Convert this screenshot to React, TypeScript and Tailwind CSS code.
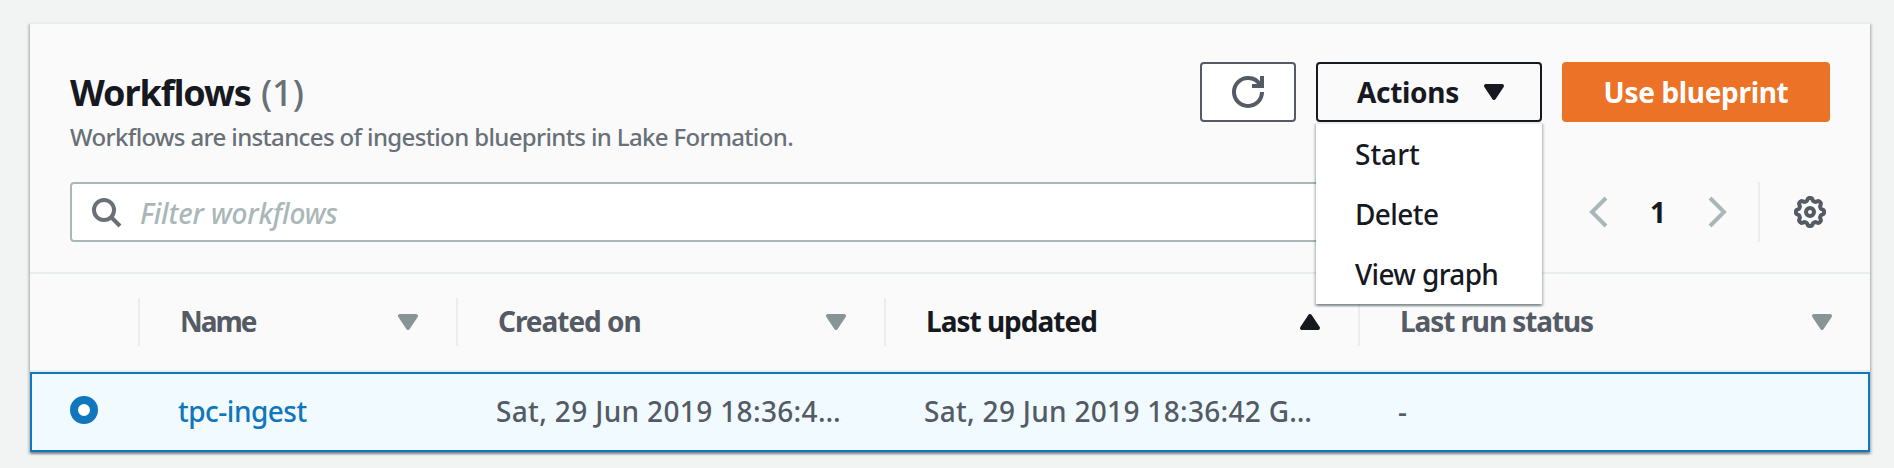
import React, { type ReactNode } from "react";

function Caret({ up = false, className = "" }: { up?: boolean; className?: string }) {
  return (
    <svg viewBox="0 0 16 16" className={`size-8 shrink-0 fill-current stroke-current ${className}`} strokeWidth="2" strokeLinejoin="round">
      <path d={up ? "M4 11h8L8 5l-4 6z" : "M4 5h8l-4 6-4-6z"} />
    </svg>
  );
}

function RefreshIcon() {
  return (
    <svg viewBox="0 0 16 16" className="size-8 fill-none stroke-[#545b64]" strokeWidth="2">
      <path d="M10 5h5V0" />
      <path d="M15 8a6.957 6.957 0 0 1-7 7 6.957 6.957 0 0 1-7-7 6.957 6.957 0 0 1 7-7 6.87 6.87 0 0 1 6.3 4" />
    </svg>
  );
}

function SearchIcon() {
  return (
    <svg viewBox="0 0 32 32" className="size-8 shrink-0 fill-none stroke-[#687078]" strokeWidth="4">
      <circle cx="14" cy="14" r="10" />
      <path d="M21 21l9 9" />
    </svg>
  );
}

function Chevron({ right = false }: { right?: boolean }) {
  return (
    <svg viewBox="0 0 32 32" className="size-8 shrink-0 fill-none stroke-[#aab7b8]" strokeWidth="4">
      <path d={right ? "M8 2l14 14L8 30" : "M24 2L10 16l14 14"} />
    </svg>
  );
}

function gearPath() {
  const points: string[] = [];
  for (let i = 0; i <= 128; i++) {
    const a = (i / 128) * Math.PI * 2;
    const wave = Math.cos(8 * a);
    const r = 12.7 + 1.45 * Math.tanh(1.8 * wave);
    points.push(`${(16 + r * Math.cos(a)).toFixed(2)} ${(16 + r * Math.sin(a)).toFixed(2)}`);
  }
  return `M${points.join("L")}Z`;
}

function GearIcon() {
  return (
    <svg viewBox="0 0 32 32" className="size-8 shrink-0 fill-none stroke-[#545b64]" strokeWidth="4" strokeLinejoin="round">
      <path d={gearPath()} />
      <circle cx="16" cy="16" r="4" />
    </svg>
  );
}

function HeaderCell({ width, tracking, last = false, sorted = false, children }: { width: string; tracking: string; last?: boolean; sorted?: boolean; children: ReactNode }) {
  return (
    <div className={`flex h-12 items-center justify-between border-[#eaeded] pl-10 ${width} ${last ? "pr-8" : "border-r-2 pr-[32px]"} ${sorted ? "text-[#16191f]" : "text-[#545b64]"}`}>
      <span className={`mb-[2px] font-bold ${tracking}`}>{children}</span>
      <Caret up={sorted} className={sorted ? "" : "text-[#879596]"} />
    </div>
  );
}

export default function App() {
  return (
    <div className="h-[468px] overflow-hidden bg-[#f2f3f3] pt-[22px] font-['Noto_Sans',sans-serif] text-[28px] leading-[40px] font-medium whitespace-nowrap text-[#545b64]">
      <main className="ml-[30px] w-[1840px] border-t-2 border-[#eaeded] bg-[#fafafa] shadow-[0_2px_2px_0_rgba(0,28,36,0.3),2px_2px_2px_0_rgba(0,28,36,0.15),-2px_2px_2px_0_rgba(0,28,36,0.15)]">
        <header className="flex h-[158px] justify-between px-10 pt-[38px]">
          <div>
            <h1 className="flex h-[62px] items-center gap-[10px] text-[36px] text-[#16191f]">
              <span className="font-bold tracking-[-1.05px]">Workflows</span>
              <span className="text-[#687078]">(1)</span>
            </h1>
            <p className="-mt-[5px] text-[24px] leading-[36px] tracking-[-0.64px] text-[#687078]">
              Workflows are instances of ingestion blueprints in Lake Formation.
            </p>
          </div>
          <div className="flex h-[60px] gap-5 font-bold">
            <button className="flex w-24 items-center justify-center rounded-[4px] border-2 border-[#545b64] bg-white">
              <RefreshIcon />
            </button>
            <div className="relative w-[226px]">
              <button className="flex h-[60px] w-full items-center justify-between rounded-[4px] border-2 border-[#16191f] pr-[30px] pl-[39px] text-[#16191f]">
                <span className="tracking-[-0.32px]">Actions</span>
                <Caret />
              </button>
              <ul className="absolute top-[60px] left-0 z-10 w-[226px] border-t-2 border-[#eaeded] bg-white pl-[39px] font-medium text-[#16191f] shadow-[0_2px_2px_0_rgba(0,28,36,0.3),2px_2px_2px_0_rgba(0,28,36,0.15),-2px_2px_2px_0_rgba(0,28,36,0.15)]">
                <li className="h-[60px] leading-[60px] tracking-[0px]">Start</li>
                <li className="h-[60px] leading-[60px] tracking-[-0.6px]">Delete</li>
                <li className="h-[60px] leading-[60px] tracking-[-0.65px]">View graph</li>
              </ul>
            </div>
            <button className="w-[268px] rounded-[4px] bg-[#eb7226] tracking-[-0.33px] text-white">Use blueprint</button>
          </div>
        </header>

        <div className="flex h-[92px] items-start justify-between border-b-2 border-[#eaeded] px-10">
          <div className="flex h-[60px] w-[1440px] items-center rounded-[4px] border-2 border-[#aab7b8] bg-white pl-[18px]">
            <SearchIcon />
            <span className="mt-[2px] ml-[18px] tracking-[-0.15px] text-[#aab7b8] italic">Filter workflows</span>
          </div>
          <div className="flex h-[60px] items-center">
            <Chevron />
            <span className="w-[88px] text-center font-bold text-[#16191f]">1</span>
            <Chevron right />
            <span className="ml-[24px] h-[60px] w-[2px] bg-[#eaeded]" />
            <span className="pr-1 pl-[34px]">
              <GearIcon />
            </span>
          </div>
        </div>

        <div className="flex h-[98px] items-center border-b-2 border-[#eaeded]">
          <div className="h-12 w-[110px] border-r-2 border-[#eaeded]" />
          <HeaderCell width="w-[318px]" tracking="tracking-[-2px]">Name</HeaderCell>
          <HeaderCell width="w-[428px]" tracking="tracking-[-1.03px]">Created on</HeaderCell>
          <HeaderCell width="w-[474px]" tracking="tracking-[-1px]" sorted>Last updated</HeaderCell>
          <HeaderCell width="w-[510px]" tracking="tracking-[-1.1px]" last>Last run status</HeaderCell>
        </div>

        <div className="flex h-20 items-center border-2 border-[#1176bb] bg-[#f1faff]">
          <div className="w-[146px] pl-[38px]">
            <span className="-mt-1 block size-7 rounded-full border-8 border-[#1176bb] bg-white" />
          </div>
          <a className="mb-[2px] w-[318px] tracking-[-0.5px] text-[#1176bb]">tpc-ingest</a>
          <span className="mb-[2px] w-[428px] tracking-[0.35px]">Sat, 29 Jun 2019 18:36:4…</span>
          <span className="mb-[2px] w-[474px] tracking-[0.3px]">Sat, 29 Jun 2019 18:36:42 G…</span>
          <span className="mb-[2px]">-</span>
        </div>
      </main>
    </div>
  );
}
